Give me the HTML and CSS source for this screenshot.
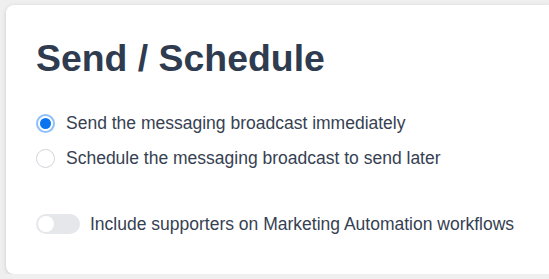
FILE: index.html
```html
<!DOCTYPE html>
<html>
<head>
<meta charset="utf-8">
<link rel="stylesheet" href="styles.css">
</head>
<body>
<div class="card">
  <h1 class="title">Send / Schedule</h1>
  <div class="options">
    <label class="option">
      <span class="radio checked"><span class="dot"></span></span>
      <span class="label">Send the messaging broadcast immediately</span>
    </label>
    <label class="option">
      <span class="radio"></span>
      <span class="label">Schedule the messaging broadcast to send later</span>
    </label>
  </div>
  <label class="switch-row">
    <span class="switch"><span class="knob"></span></span>
    <span class="label">Include supporters on Marketing Automation workflows</span>
  </label>
</div>
</body>
</html>
```
FILE: styles.css
```css
html, body {
  margin: 0;
  padding: 0;
}
body {
  background: #efefef;
  font-family: "Liberation Sans", Arial, sans-serif;
  color: #334155;
  padding: 5px 0 0 6px;
  overflow: hidden;
}
.card {
  background: #ffffff;
  border-radius: 8px 0 0 8px;
  box-shadow: 0 1px 4px rgba(0, 0, 0, 0.15);
  width: calc(100vw - 6px);
  height: 269px;
  box-sizing: border-box;
  padding: 30px 30px;
}
.title {
  margin: 0;
  font-size: 37.4px;
  font-weight: 700;
  line-height: 46px;
  color: #2f3c50;
}
.options {
  margin-top: 30px;
  display: flex;
  flex-direction: column;
  gap: 11px;
}
.option, .switch-row {
  display: flex;
  align-items: center;
  font-size: 17.5px;
  line-height: 24px;
  color: #364152;
}
.radio {
  width: 19px;
  height: 19px;
  box-sizing: border-box;
  border-radius: 50%;
  border: 1px solid #d1d5db;
  margin-right: 11px;
  display: flex;
  align-items: center;
  justify-content: center;
  background: #fff;
  flex: none;
}
.radio.checked {
  border: 2px solid #8ec0fb;
}
.radio .dot {
  width: 11px;
  height: 11px;
  border-radius: 50%;
  background: #0a74f0;
}
.switch-row {
  margin-top: 42px;
}
.switch {
  width: 44px;
  height: 20px;
  border-radius: 10px;
  background: #e5e7eb;
  margin-right: 10px;
  display: flex;
  align-items: center;
  padding: 2px;
  box-sizing: border-box;
  flex: none;
}
.knob {
  width: 16px;
  height: 16px;
  border-radius: 50%;
  background: #fff;
}
```
